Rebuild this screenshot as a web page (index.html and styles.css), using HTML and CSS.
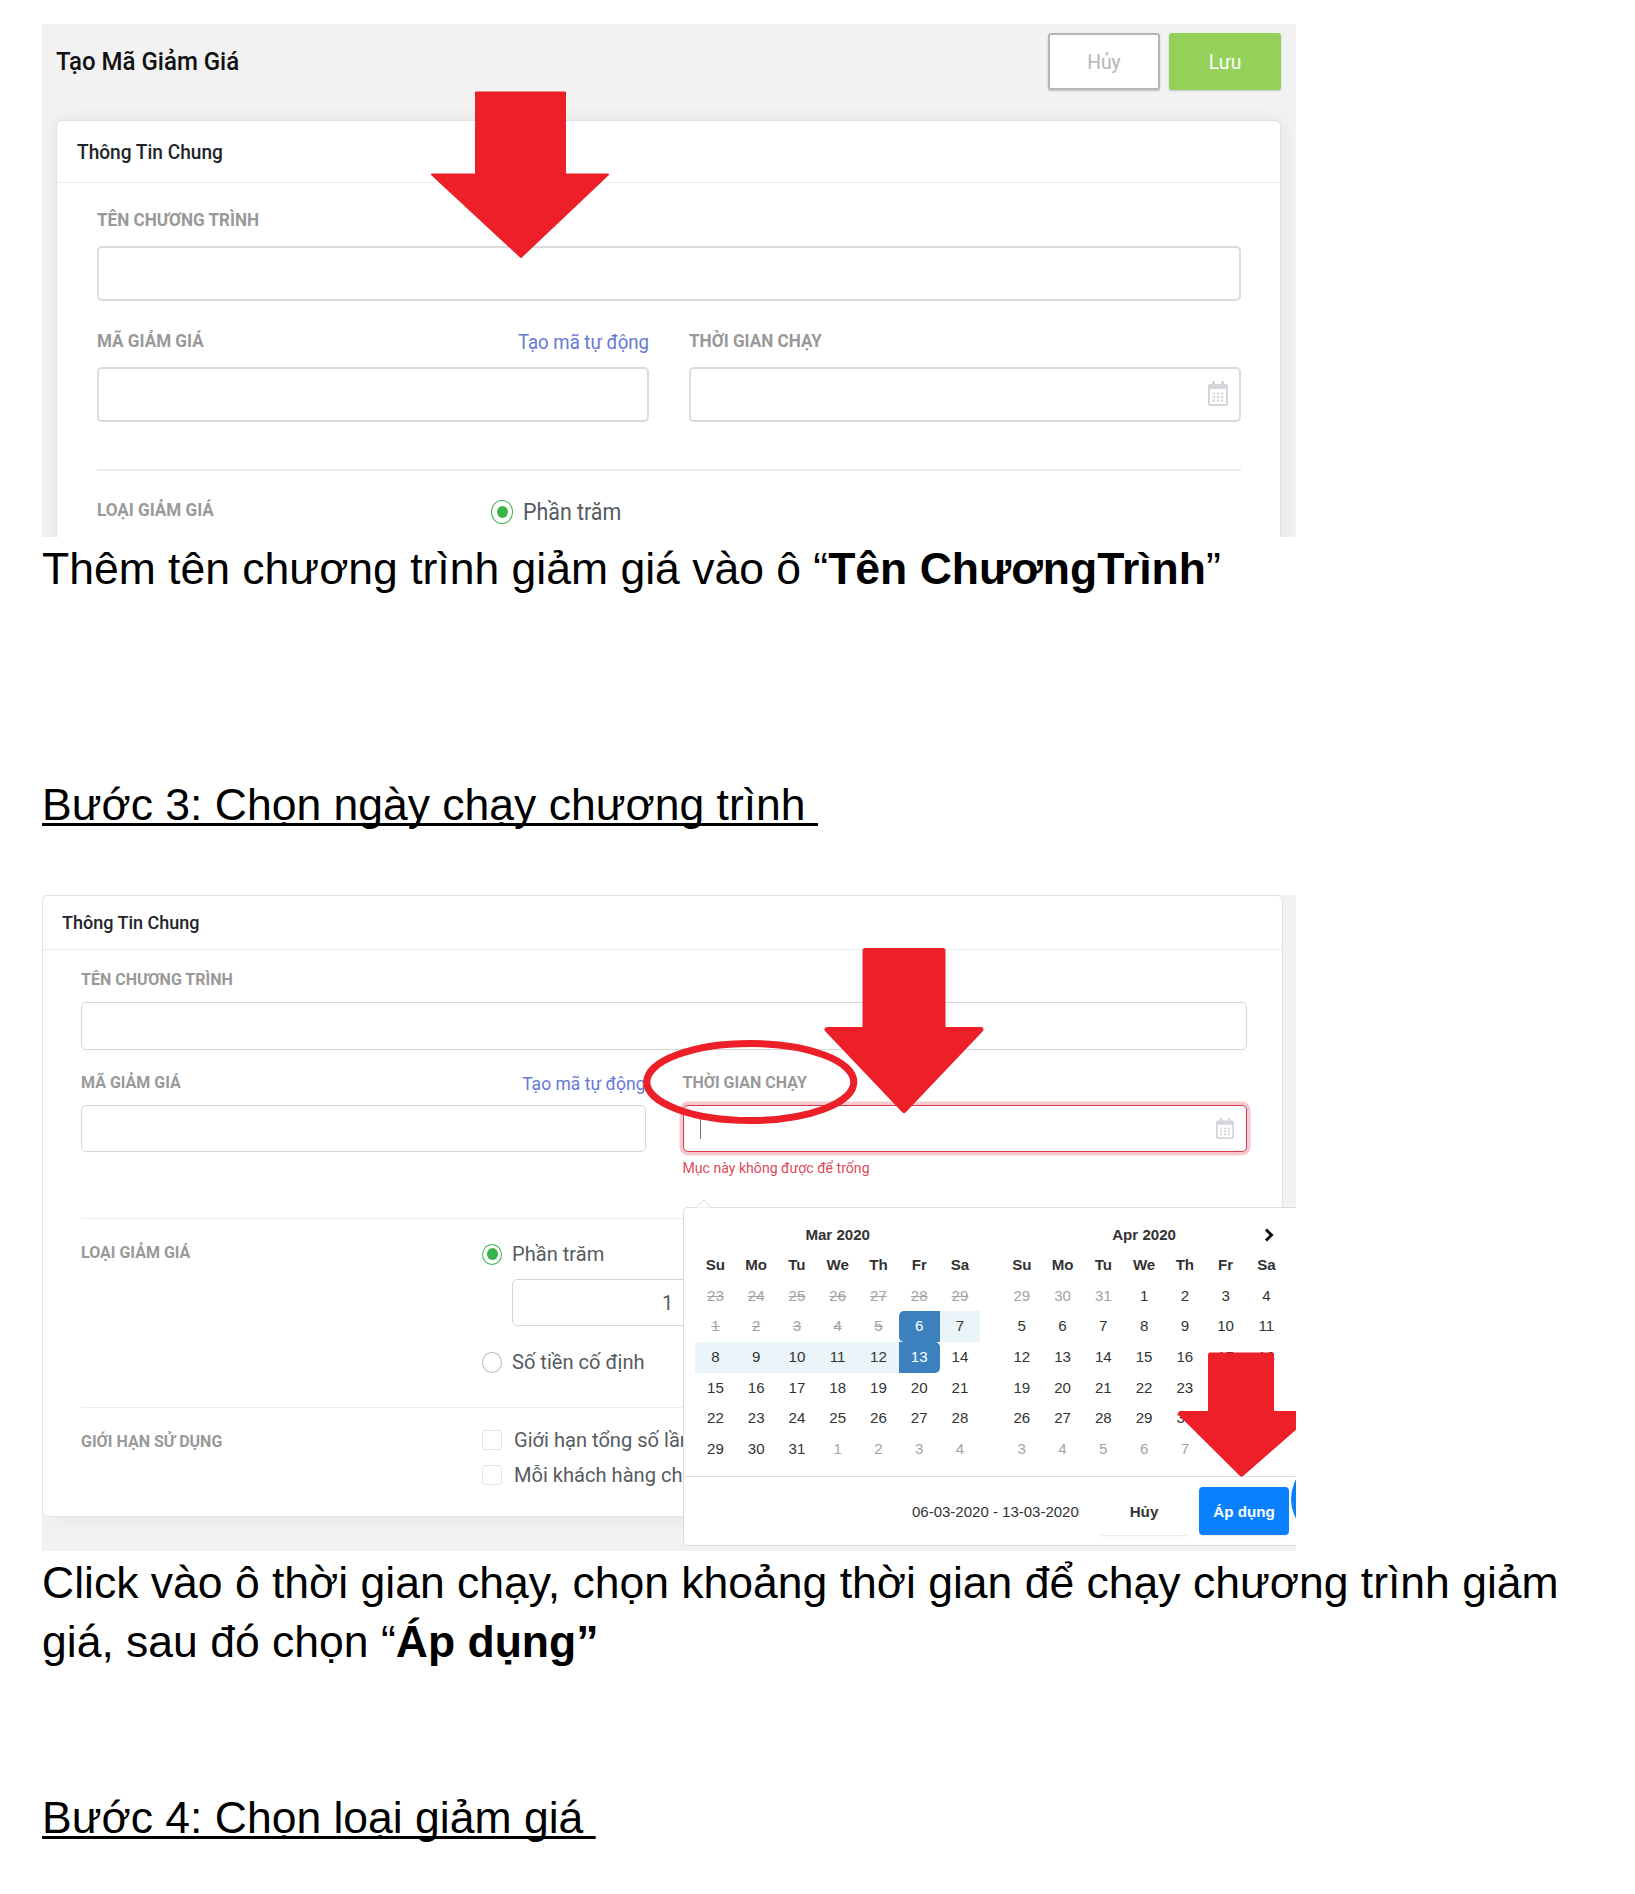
FILE: index.html
```html
<!DOCTYPE html>
<html lang="vi">
<head>
<meta charset="utf-8">
<title>Tạo Mã Giảm Giá</title>
<link rel="stylesheet" href="styles.css">
</head>
<body>
<main class="doc">
  <section class="shot shot-a">
    <div class="topbar">
      <h1 class="t">Tạo Mã Giảm Giá</h1>
      <div class="actions">
        <button class="btn"><span class="t">Hủy</span></button>
        <button class="btn btn-save"><span class="t">Lưu</span></button>
      </div>
    </div>
    <div class="card">
      <div class="card-head"><span class="t">Thông Tin Chung</span></div>
      <div class="card-body">
        <div class="label t">TÊN CHƯƠNG TRÌNH</div>
        <div class="input"></div>
        <div class="cols">
          <div>
            <div class="label-row"><span class="label t">MÃ GIẢM GIÁ</span><a class="link t">Tạo mã tự động</a></div>
            <div class="input"></div>
          </div>
          <div>
            <div class="label-row"><span class="label t">THỜI GIAN CHẠY</span></div>
            <div class="input with-icon">
              <svg class="cal" viewBox="0 0 20 25" preserveAspectRatio="none"><path d="M1 7V22.500Q1 24 2.500 24H17.500Q19 24 19 22.500V7" fill="none" stroke="#d3d6db" stroke-width="2"/><path d="M0 8V5Q0 3 2 3H4V1Q4 0 5.500 0T7 1V3H13V1Q13 0 14.500 0T16 1V3H18Q20 3 20 5V8Z" fill="#d3d6db"/><path d="M4.500 12.500H15.500M4.500 16H15.500M4.500 19.500H15.500" stroke="#d3d6db" stroke-width="2" stroke-dasharray="2.300 2"/></svg>
            </div>
          </div>
        </div>
        <div class="rule"></div>
        <div class="split">
          <div class="label t">LOẠI GIẢM GIÁ</div>
          <div class="choice"><i class="radio on"></i><span class="t">Phần trăm</span></div>
        </div>
      </div>
    </div>
    <svg class="marks" viewBox="0 0 1254 513"><path class="arrow" d="M434 68.500H523V150.500H566L479 233L390 150.500H434Z"/></svg>
  </section>

  <p class="text">Thêm tên chương trình giảm giá vào ô “<b>Tên ChươngTrình</b>”</p>
  <p class="text step step-3">Bước 3: Chọn ngày chạy chương trình&nbsp;</p>

  <section class="shot shot-b">
    <div class="card">
      <div class="card-head"><span class="t">Thông Tin Chung</span></div>
      <div class="card-body">
        <div class="label t">TÊN CHƯƠNG TRÌNH</div>
        <div class="input"></div>
        <div class="cols">
          <div>
            <div class="label-row"><span class="label t">MÃ GIẢM GIÁ</span><a class="link t">Tạo mã tự động</a></div>
            <div class="input"></div>
          </div>
          <div class="field-error">
            <div class="label-row"><span class="label t">THỜI GIAN CHẠY</span></div>
            <div class="input with-icon invalid">
              <i class="caret"></i>
              <svg class="cal" viewBox="0 0 20 25" preserveAspectRatio="none"><path d="M1 7V22.500Q1 24 2.500 24H17.500Q19 24 19 22.500V7" fill="none" stroke="#d3d6db" stroke-width="2"/><path d="M0 8V5Q0 3 2 3H4V1Q4 0 5.500 0T7 1V3H13V1Q13 0 14.500 0T16 1V3H18Q20 3 20 5V8Z" fill="#d3d6db"/><path d="M4.500 12.500H15.500M4.500 16H15.500M4.500 19.500H15.500" stroke="#d3d6db" stroke-width="2" stroke-dasharray="2.300 2"/></svg>
            </div>
            <div class="error t">Mục này không được để trống</div>
          </div>
        </div>
        <div class="rule"></div>
        <div class="split">
          <div class="label t">LOẠI GIẢM GIÁ</div>
          <div>
            <div class="choice"><i class="radio on"></i><span class="t">Phần trăm</span></div>
            <div class="input percent"><span class="t">1</span></div>
            <div class="choice"><i class="radio"></i><span class="t">Số tiền cố định</span></div>
          </div>
        </div>
        <div class="rule rule-2"></div>
        <div class="split limits">
          <div class="label t">GIỚI HẠN SỬ DỤNG</div>
          <div class="checks">
            <div class="choice"><i class="check"></i><span class="t">Giới hạn tổng số lần</span></div>
            <div class="choice"><i class="check"></i><span class="t">Mỗi khách hàng chỉ</span></div>
          </div>
        </div>
      </div>
    </div>
    <div class="picker">
      <svg class="nib" viewBox="0 0 16 9"><path d="M0 8.500L7.500 1L15 8.500" fill="#fff" stroke="#d6d6d6"/></svg>
      <div class="months">
        <div class="month">
          <div class="month-name">Mar 2020</div>
          <div class="grid">
            <b>Su</b><b>Mo</b><b>Tu</b><b>We</b><b>Th</b><b>Fr</b><b>Sa</b>
            <s>23</s><s>24</s><s>25</s><s>26</s><s>27</s><s>28</s><s>29</s>
            <s>1</s><s>2</s><s>3</s><s>4</s><s>5</s><span class="start">6</span><span class="in">7</span>
            <span class="in">8</span><span class="in">9</span><span class="in">10</span><span class="in">11</span><span class="in">12</span><span class="end">13</span><span>14</span>
            <span>15</span><span>16</span><span>17</span><span>18</span><span>19</span><span>20</span><span>21</span>
            <span>22</span><span>23</span><span>24</span><span>25</span><span>26</span><span>27</span><span>28</span>
            <span>29</span><span>30</span><span>31</span><span class="off">1</span><span class="off">2</span><span class="off">3</span><span class="off">4</span>
          </div>
        </div>
        <div class="month">
          <div class="month-name">Apr 2020<svg class="next" viewBox="0 0 10 14"><path d="M2 1.500L7.500 7L2 12.500" fill="none" stroke="#111" stroke-width="3"/></svg></div>
          <div class="grid">
            <b>Su</b><b>Mo</b><b>Tu</b><b>We</b><b>Th</b><b>Fr</b><b>Sa</b>
            <span class="off">29</span><span class="off">30</span><span class="off">31</span><span>1</span><span>2</span><span>3</span><span>4</span>
            <span>5</span><span>6</span><span>7</span><span>8</span><span>9</span><span>10</span><span>11</span>
            <span>12</span><span>13</span><span>14</span><span>15</span><span>16</span><span>17</span><span>18</span>
            <span>19</span><span>20</span><span>21</span><span>22</span><span>23</span><span></span><span></span>
            <span>26</span><span>27</span><span>28</span><span>29</span><span>30</span><span></span><span></span>
            <span class="off">3</span><span class="off">4</span><span class="off">5</span><span class="off">6</span><span class="off">7</span><span></span><span></span>
          </div>
        </div>
      </div>
      <div class="picker-foot">
        <span class="range">06-03-2020 - 13-03-2020</span>
        <button class="pbtn">Hủy</button>
        <button class="pbtn apply">Áp dụng</button>
      </div>
    </div>
    <svg class="marks" viewBox="0 0 1254 656">
      <circle cx="1289" cy="604" r="40" fill="#0a80f5"/>
      <ellipse cx="708.300" cy="187" rx="103.500" ry="38.500" fill="none" stroke="#ed2029" stroke-width="7"/>
      <path class="arrow round" d="M823 55.500H901V134.500H939L862 215.500L785 134.500H823Z"/>
      <path class="arrow round" d="M1168.500 460H1229.500V518.500H1269L1199.500 579L1138.500 518.500H1168.500Z"/>
    </svg>
  </section>

  <p class="text">Click vào ô thời gian chạy, chọn khoảng thời gian để chạy chương trình giảm<br>giá, sau đó chọn “<b>Áp dụng”</b></p>
  <p class="text step step-4">Bước 4: Chọn loại giảm giá&nbsp;</p>
</main>
</body>
</html>
```
FILE: styles.css
```css
* { box-sizing: border-box; }
body { margin: 0; background: #fff; overflow: hidden; }
.doc { padding: 24px 0 0 42px; width: 1635px; height: 1894px; overflow: hidden; }

/* Article text */
.text { margin: 0; padding-top: 2px; font: 44.5px/59px "Liberation Sans", Arial, sans-serif; color: #000; white-space: nowrap; }
.step { text-decoration: underline; text-decoration-thickness: 3px; text-underline-offset: 3px; text-decoration-skip-ink: none; }
.step-3 { margin-top: 175px; }
.step-4 { margin-top: 115px; }

/* Shared form pieces */
.shot { position: relative; width: 1254px; overflow: hidden; background: #f2f2f2; font-family: Roboto, sans-serif; }
.t { transform: scaleY(1.08); }
.card { background: #fff; border: 1px solid #e0e2e4; border-radius: 6px; }
.card-head { display: flex; align-items: center; border-bottom: 1px solid #e9ecef; color: #212529; font-weight: 500; }
.label { color: #999; font-weight: 700; white-space: nowrap; }
.label-row { display: flex; justify-content: space-between; }
.link { color: #6677d9; }
.input { border: 2px solid #d9dbdd; border-radius: 5px; background: #fff; }
.with-icon { display: flex; align-items: center; justify-content: flex-end; }
.cols { display: grid; grid-template-columns: 1fr 1fr; }
.split { display: grid; }
.choice { display: flex; align-items: center; color: #555b61; white-space: nowrap; }
.radio { border: 1.5px solid #b9bcc0; border-radius: 50%; display: flex; align-items: center; justify-content: center; flex: none; }
.radio.on { border-color: #3bb34a; }
.radio.on::after { content: ""; width: 11px; height: 12px; border-radius: 50%; background: #38b449; }
.rule { background: #eaecee; }
.marks { position: absolute; left: 0; top: 0; width: 100%; height: 100%; }
.arrow { fill: #ed2029; stroke: #ed2029; stroke-width: 2; stroke-linejoin: round; }
.arrow.round { stroke-width: 5; }

/* First form */
.shot-a { height: 513px; padding: 9px 15px 0 14px; }
.shot-a .topbar { display: flex; justify-content: space-between; align-items: center; height: 57px; }
.shot-a h1 { margin: 0 0 2px; font-size: 24px; line-height: 30px; font-weight: 500; color: #111; }
.actions { display: flex; gap: 9px; }
.btn { width: 112px; height: 57px; padding: 0; border: 2px solid #b5b5b5; border-radius: 3px; background: #fff; color: #b5b5b5; font: 19.3px Roboto, sans-serif; box-shadow: 0 1px 2px rgba(0,0,0,.2); }
.btn .t { display: inline-block; }
.btn-save { border-color: #94d158; background: #94d158; color: #fff; }
.shot-a .card { height: 440px; margin-top: 30px; box-shadow: 0 0 18px rgba(0,0,0,.07); }
.shot-a .card-head { height: 62px; padding-left: 20px; font-size: 19.1px; }
.shot-a .card-body { padding: 25px 39px 0 40px; }
.shot-a .label { font-size: 17.1px; line-height: 25px; height: 25px; }
.shot-a .link { font-size: 18.6px; line-height: 26px; }
.shot-a .input { height: 55px; margin-top: 13px; }
.shot-a .label-row { height: 25px; }
.shot-a .cols { gap: 40px; margin-top: 28px; }
.shot-a .with-icon { padding-right: 11px; }
.shot-a .cal { width: 20px; height: 25px; margin-bottom: 2px; }
.shot-a .rule { height: 2px; margin: 47px 0 27px; }
.shot-a .split { grid-template-columns: 394px 1fr; }
.shot-a .choice { gap: 10px; font-size: 21.4px; line-height: 27px; }
.shot-a .radio { width: 22px; height: 24px; }

/* Second form */
.shot-b { height: 656px; margin-top: 61px; }
.shot-b .t { transform: scaleY(1.04); }
.shot-b .card { width: 1241px; height: 622px; box-shadow: 0 18px 14px -10px rgba(0,0,0,.03); }
.shot-b .card-head { height: 54px; padding-left: 19px; font-size: 18px; }
.shot-b .card-body { padding: 20px 35px 0 38px; }
.shot-b .label { font-size: 16px; line-height: 20px; }
.shot-b .link { font-size: 17.5px; line-height: 22px; }
.shot-b .input { height: 48px; margin-top: 12px; border-width: 1px; border-color: #d3d6d8; }
.shot-b .label-row { height: 20px; padding-top: 1px; }
.shot-b .cols { gap: 37px; margin-top: 22px; height: 80px; }
.shot-b .cols .input { height: 47px; margin-top: 13px; }
.shot-b .cols .invalid { border-color: #d5384c; box-shadow: 0 0 0 3.5px #f7c8ce; padding-right: 12px; }
.caret { width: 1px; height: 21px; margin: 0 auto 0 16px; background: #777; }
.shot-b .cal { width: 18px; height: 21px; }
.error { margin-top: 7px; font-size: 14.1px; line-height: 18px; color: #dc4a5c; }
.shot-b .rule { height: 1px; margin: 66px 0 24px; }
.shot-b .rule-2 { margin: 34px 0 15px; }
.shot-b .split { grid-template-columns: 401px 1fr; }
.shot-b .split .label { margin-top: 2px; }
.shot-b .choice { gap: 10px; height: 22px; font-size: 20.1px; line-height: 22px; }
.shot-b .radio { width: 20px; height: 21px; }
.shot-b .percent { display: flex; align-items: center; width: 240px; height: 47px; margin: 14px 0 25px 30px; padding-left: 149px; font-size: 20px; color: #555b61; }
.shot-b .limits .label { margin-top: 10px; }
.shot-b .checks .choice { height: 34.5px; gap: 12px; }
.check { width: 20px; height: 20px; border: 1px solid #e2e2e2; border-radius: 3px; }

/* Date range menu */
.picker { position: absolute; left: 641px; top: 312px; width: 640px; height: 339px; background: #fff; border: 1px solid #dcdcdc; border-radius: 5px; font-family: "Liberation Sans", Arial, sans-serif; font-size: 15.1px; color: #333; }
.nib { position: absolute; left: 12px; top: -9px; width: 16px; height: 9px; }
.months { display: flex; gap: 21px; height: 269px; padding: 11px 0 0 11px; border-bottom: 1px solid #ddd; }
.month { width: 285.4px; }
.month-name { position: relative; height: 31px; line-height: 31px; text-align: center; font-weight: 700; }
.next { position: absolute; right: 13px; top: 9px; width: 10px; height: 14px; }
.grid { display: grid; grid-template-columns: repeat(7, 1fr); grid-auto-rows: 30.7px; text-align: center; line-height: 30px; }
.grid s, .off { color: #a3a3a3; }
.in { background: #ebf4f8; }
.start, .end { background: #3c81bd; color: #fff; }
.start { border-radius: 5px 0 0 5px; }
.end { border-radius: 0 5px 5px 0; }
.picker-foot { display: flex; align-items: center; height: 68px; padding-left: 228px; }
.range { width: 187px; white-space: nowrap; font-size: 15px; }
.pbtn { width: 90px; height: 48px; margin-right: 10px; padding: 0; border: 0; border-radius: 4px; background: #fff; color: #333; font: 700 15.2px "Liberation Sans", Arial, sans-serif; box-shadow: 0 2px 2px -1px rgba(0,0,0,.1); }
.apply { background: #0a80ff; color: #fff; }
```
